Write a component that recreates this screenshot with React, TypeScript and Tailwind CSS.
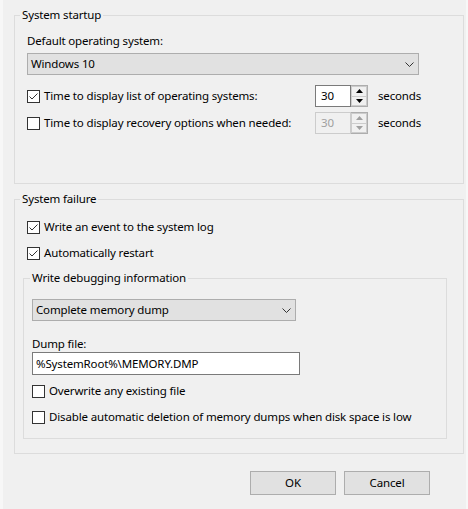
import type { ReactNode } from "react";

function Checkbox({ checked, label }: { checked?: boolean; label: string }) {
  return (
    <label className="flex h-4 items-center">
      <span className="flex h-[13px] w-[13px] shrink-0 items-center justify-center border border-[#333333] bg-white">
        {checked && (
          <svg width="11" height="11" viewBox="0 0 11 11">
            <path d="M1.5 5.5 L4 8 L9.5 2.5" fill="none" stroke="#333333" strokeWidth="1" />
          </svg>
        )}
      </span>
      <span className="ml-[4px] whitespace-nowrap">{label}</span>
    </label>
  );
}

function Spinner({ value, disabled }: { value: string; disabled?: boolean }) {
  const arrow = disabled ? "#a0a0a0" : "#000000";
  return (
    <div className="flex h-[22px] w-[53px]">
      <div
        className={
          disabled
            ? "flex-1 border border-[#cccccc] pl-[5px] leading-5 text-[#a0a0a0]"
            : "flex-1 border border-[#7a7a7a] bg-white pl-[5px] leading-5"
        }
      >
        {value}
      </div>
      <div className="flex w-[17px] flex-col border border-l-0 border-[#adadad]">
        <span className="flex flex-1 items-center justify-center border border-[#cccccc] bg-[#f0f0f0]">
          <svg width="7" height="4" viewBox="0 0 7 4">
            <path d="M0 4 L3.5 0 L7 4 Z" fill={arrow} />
          </svg>
        </span>
        <span className="flex flex-1 items-center justify-center border border-t-0 border-[#cccccc] bg-[#f0f0f0]">
          <svg width="7" height="4" viewBox="0 0 7 4">
            <path d="M0 0 L3.5 4 L7 0 Z" fill={arrow} />
          </svg>
        </span>
      </div>
    </div>
  );
}

function Dropdown({ value, width }: { value: string; width: string }) {
  return (
    <div
      className={`flex h-[22px] items-center justify-between border border-[#adadad] bg-[#e1e1e1] pl-[3px] pr-[4px] ${width}`}
    >
      <span>{value}</span>
      <svg width="9" height="5" viewBox="0 0 9 5">
        <path d="M0.5 0.5 L4.5 4.5 L8.5 0.5" fill="none" stroke="#333333" strokeWidth="1" />
      </svg>
    </div>
  );
}

function Group({ title, className, children }: { title: string; className?: string; children: ReactNode }) {
  return (
    <fieldset className={`border border-[#dcdcdc] ${className ?? ""}`}>
      <legend className="px-[2px] leading-4">{title}</legend>
      {children}
    </fieldset>
  );
}

export default function App() {
  return (
    <div className="h-[509px] w-[468px] bg-[#f7f7f7] pl-[3px] font-['Segoe_UI','Noto_Sans',sans-serif] text-[11.5px] leading-4 tracking-[-0.15px] text-black">
      <div className="h-full w-[463px] bg-[#f0f0f0] pl-[11px] pr-[2px] pt-[7px]">
        <Group title="System startup" className="px-3 pb-[49px] pt-[10px] [&>legend]:-ml-[7px]">
          <div>Default operating system:</div>
          <div className="mt-[4px]">
            <Dropdown value="Windows 10" width="w-[392px]" />
          </div>
          <div className="mt-[10px] flex h-[22px] items-center">
            <div className="w-[288px]">
              <Checkbox checked label="Time to display list of operating systems:" />
            </div>
            <Spinner value="30" />
            <span className="ml-[10px]">seconds</span>
          </div>
          <div className="mt-[5px] flex h-[22px] items-center">
            <div className="w-[288px]">
              <Checkbox label="Time to display recovery options when needed:" />
            </div>
            <Spinner value="30" disabled />
            <span className="ml-[10px]">seconds</span>
          </div>
        </Group>

        <Group title="System failure" className="mt-[7px] px-3 pb-[14px] pt-[12px] [&>legend]:-ml-[7px]">
          <Checkbox checked label="Write an event to the system log" />
          <div className="mt-[10px]">
            <Checkbox checked label="Automatically restart" />
          </div>
          <fieldset className="-ml-[4px] mr-[4px] mt-[9px] border border-[#dcdcdc] px-[8px] pb-[13px] pt-[13px]">
            <legend className="-ml-[2px] px-[2px] leading-4">Write debugging information</legend>
            <Dropdown value="Complete memory dump" width="w-[264px]" />
            <div className="mt-[15px]">Dump file:</div>
            <div className="h-[23px] w-[268px] border border-[#7a7a7a] bg-white pl-[3px] leading-[21px]">
              %SystemRoot%\MEMORY.DMP
            </div>
            <div className="mt-[8px]">
              <Checkbox label="Overwrite any existing file" />
            </div>
            <div className="mt-[10px]">
              <Checkbox label="Disable automatic deletion of memory dumps when disk space is low" />
            </div>
          </fieldset>
        </Group>

        <div className="mt-[17px] flex justify-end gap-[8px] pr-[34px]">
          <button className="h-[24px] w-[86px] border border-[#adadad] bg-[#e1e1e1]">OK</button>
          <button className="h-[24px] w-[86px] border border-[#adadad] bg-[#e1e1e1]">Cancel</button>
        </div>
      </div>
    </div>
  );
}
